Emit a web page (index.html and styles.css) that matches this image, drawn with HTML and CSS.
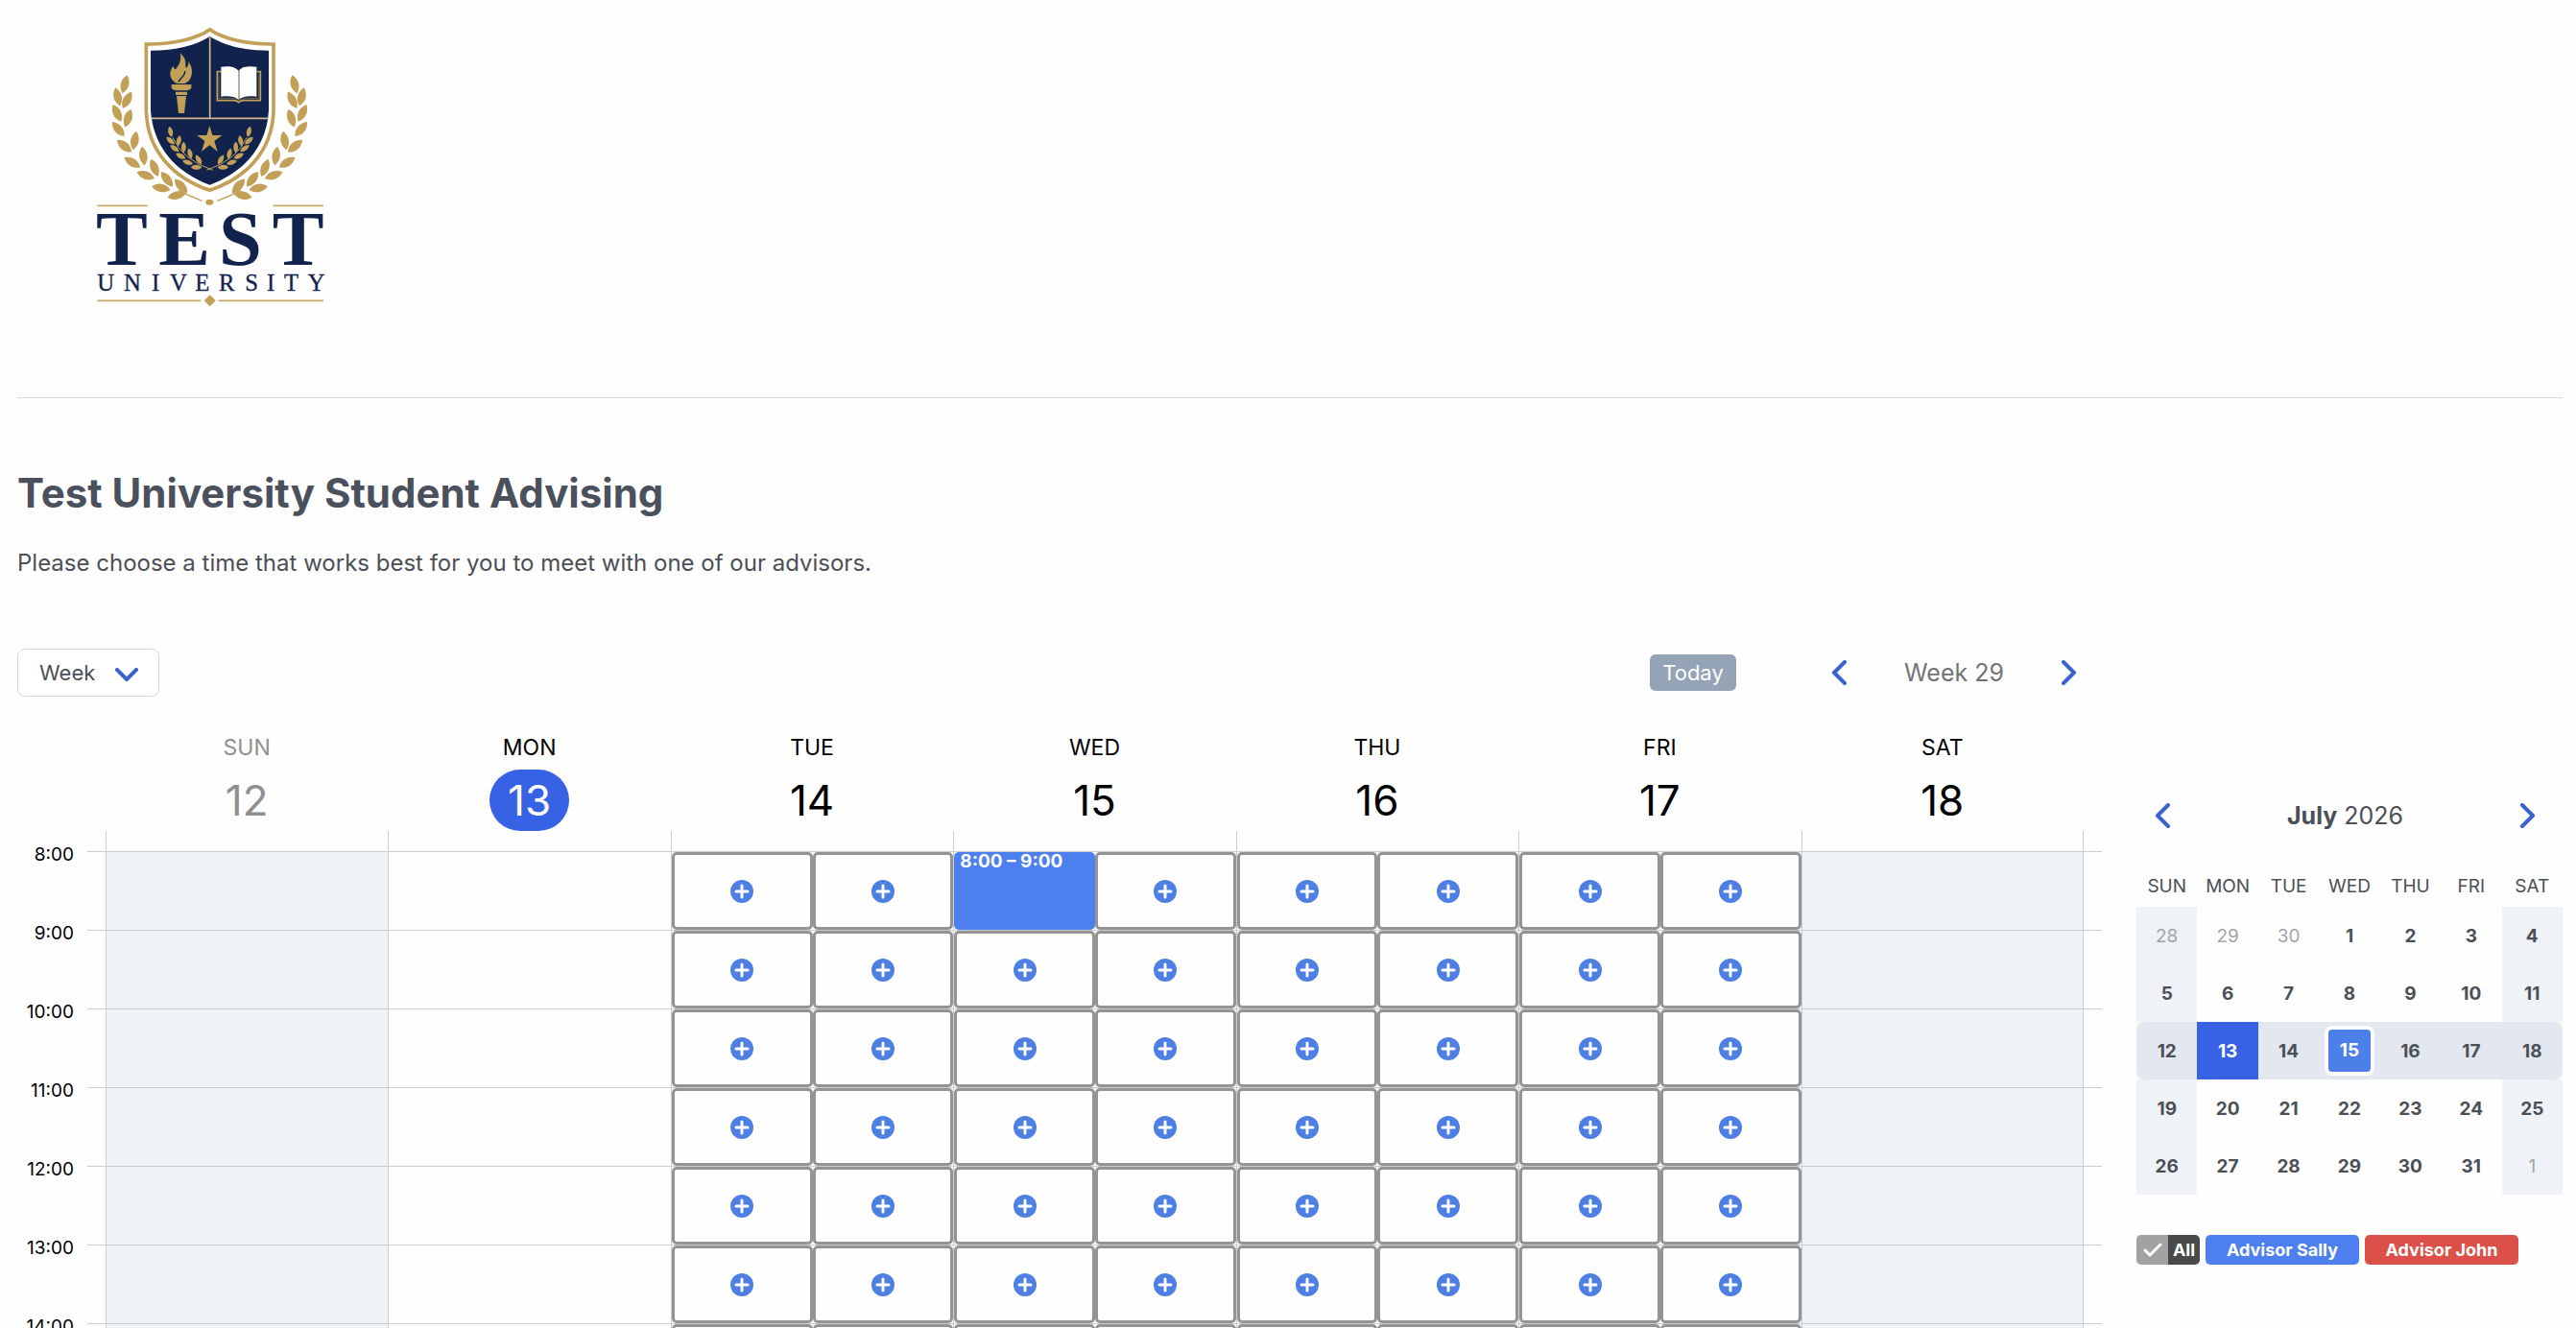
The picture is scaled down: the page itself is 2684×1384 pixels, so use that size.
FILE: index.html
```
<!DOCTYPE html>
<html lang="en">
  <head>
    <meta charset="utf-8">
    <title>Test University Student Advising</title>
    <link rel="stylesheet" href="styles.css">
  </head>

<body>
  <header class="site-header">
    <svg class="logo" viewBox="0 0 840 1020" role="img" aria-label="Test University">
      <defs>
        <path id="leaf" d="M0 -30 C17 -12 17 12 0 29 C-17 12 -17 -12 0 -30 Z"/>
        <g id="branch">
          <use href="#leaf" transform="translate(150 264) rotate(15)"/>
          <use href="#leaf" transform="translate(128 303) rotate(-14)"/>
          <use href="#leaf" transform="translate(157 313) rotate(28)"/>
          <use href="#leaf" transform="translate(126 354) rotate(-26)"/>
          <use href="#leaf" transform="translate(160 370) rotate(18)"/>
          <use href="#leaf" transform="translate(130 404) rotate(-40)"/>
          <use href="#leaf" transform="translate(181 440) rotate(10)"/>
          <use href="#leaf" transform="translate(149 457) rotate(-50)"/>
          <use href="#leaf" transform="translate(208 488) rotate(-8)"/>
          <use href="#leaf" transform="translate(174 508) rotate(-58)"/>
          <use href="#leaf" transform="translate(243 525) rotate(-22)"/>
          <use href="#leaf" transform="translate(216 548) rotate(-70)"/>
          <use href="#leaf" transform="translate(282 561) rotate(-38)"/>
          <use href="#leaf" transform="translate(264 588) rotate(-80)"/>
          <use href="#leaf" transform="translate(326 582) rotate(-42)"/>
          <use href="#leaf" transform="translate(312 611) rotate(78)"/>
          <path d="M318 596 Q350 612 392 628" fill="none" stroke="#c2a057" stroke-width="4"/>
        </g>
        <g id="sprig">
          <use href="#leaf" transform="translate(293 412) rotate(-12) scale(.58)"/>
          <use href="#leaf" transform="translate(293 440) rotate(-48) scale(.58)"/>
          <use href="#leaf" transform="translate(319 440) rotate(10) scale(.58)"/>
          <use href="#leaf" transform="translate(306 464) rotate(-55) scale(.58)"/>
          <use href="#leaf" transform="translate(334 461) rotate(0) scale(.58)"/>
          <use href="#leaf" transform="translate(325 488) rotate(-62) scale(.58)"/>
          <use href="#leaf" transform="translate(354 480) rotate(-15) scale(.58)"/>
          <use href="#leaf" transform="translate(347 508) rotate(-72) scale(.58)"/>
          <use href="#leaf" transform="translate(381 499) rotate(-32) scale(.58)"/>
          <use href="#leaf" transform="translate(374 523) rotate(-88) scale(.58)"/>
          <path d="M300 430 Q330 500 425 532" fill="none" stroke="#c2a057" stroke-width="3"/>
        </g>
      </defs>

      <!-- shield -->
      <path d="M416 92 C455 120 530 139 615 138 L615 345 C612 480 520 560 416 595 C312 560 220 480 217 345 L217 138 C302 139 377 120 416 92 Z" fill="#fefefe" stroke="#c2a057" stroke-width="11"/>
      <path d="M416 114 C460 142 520 158 600 158 L600 345 C594 460 520 540 416 578 C312 540 238 460 231 345 L231 158 C312 158 372 142 416 114 Z" fill="#11234d"/>
      <path d="M416 116 V370 M233 370 H599" stroke="#d0b98a" stroke-width="5"/>

      <g fill="#c2a057">
        <use href="#branch"/>
        <use href="#branch" transform="translate(831 0) scale(-1 1)"/>
        <use href="#sprig"/>
        <use href="#sprig" transform="translate(831 0) scale(-1 1)"/>
        <ellipse cx="415" cy="632" rx="12" ry="9"/>
        <!-- torch -->
        <path d="M323 166 C348 188 336 204 342 212 C350 206 350 198 349 192 C366 214 364 250 338 261 H312 C292 250 284 226 302 206 C303 214 306 217 309 216 C322 202 328 186 323 166 Z"/>
        <path d="M296 264 H358 V276 Q352 282 345 283 H309 Q302 282 296 276 Z M309 287 H345 V297 H309 Z M312 300 H342 L336 354 H318 Z"/>
        <!-- star -->
        <path d="M415 393 L424 423 H454 L430 441 L440 474 L415 454 L390 474 L400 441 L376 423 H406 Z"/>
      </g>
      <path d="M318 256 C326 240 340 238 338 222" fill="none" stroke="#11234d" stroke-width="4"/>

      <!-- book -->
      <path d="M450 224 H439 V314 H490 Q500 314 506 320 Q512 314 522 314 H574 V224 H563" fill="none" stroke="#c2a057" stroke-width="5"/>
      <path d="M506 222 C494 206 472 206 451 209 V302 C472 300 494 300 506 312 C518 300 540 300 562 302 V209 C540 206 518 206 506 222 Z" fill="#fff"/>
      <path d="M507 222 V312 M444 232 V307 H484 Q498 308 507 315 Q516 308 530 307 H569 V232" fill="none" stroke="#6d6545" stroke-width="3"/>

      <!-- wordmark -->
      <path d="M64 643 H221 M614 643 H771 M64 940 H388 M443 940 H771" stroke="#c9ab68" stroke-width="5"/>
      <path d="M416 922 L434 940 L416 958 L398 940 Z" fill="#c2a057"/>
      <text class="logo-name" x="60 256 444 611" y="828">TEST</text>
      <text class="logo-sub" x="64 147 234 291 370 444 526 594 648 722" y="908">UNIVERSITY</text>
    </svg>
  </header>

  <section class="intro">
    <h1>Test University Student Advising</h1>
    <p>Please choose a time that works best for you to meet with one of our advisors.</p>
  </section>

  <main class="scheduler">
    <section class="week">
      <div class="toolbar">
        <div class="view-picker">
          <select class="view-select" aria-label="Calendar view">
            <option>Week</option>
            <option>Day</option>
            <option>Month</option>
          </select>
          <svg class="view-arrow" viewBox="0 0 24 14"><path d="M2 2 L12 12 L22 2"/></svg>
        </div>
        <div class="week-nav">
          <button class="today-button">Today</button>
          <button class="arrow-button" aria-label="Previous week"><svg class="arrow" viewBox="0 0 16 26"><path d="M14 2 L3 13 L14 24"/></svg></button>
          <span class="week-label">Week 29</span>
          <button class="arrow-button" aria-label="Next week"><svg class="arrow" viewBox="0 0 16 26"><path d="M2 2 L13 13 L2 24"/></svg></button>
        </div>
      </div>

      <div class="day-heads">
        <div class="day-head past"><span>SUN</span><span class="day-num">12</span></div>
        <div class="day-head today"><span>MON</span><span class="day-num">13</span></div>
        <div class="day-head"><span>TUE</span><span class="day-num">14</span></div>
        <div class="day-head"><span>WED</span><span class="day-num">15</span></div>
        <div class="day-head"><span>THU</span><span class="day-num">16</span></div>
        <div class="day-head"><span>FRI</span><span class="day-num">17</span></div>
        <div class="day-head"><span>SAT</span><span class="day-num">18</span></div>
      </div>

      <div class="js-hours hours"></div>
    </section>

    <aside class="sidebar">
      <div class="month-nav">
        <button class="arrow-button" aria-label="Previous month"><svg class="arrow" viewBox="0 0 16 26"><path d="M14 2 L3 13 L14 24"/></svg></button>
        <span class="month-label"><b>July</b> 2026</span>
        <button class="arrow-button" aria-label="Next month"><svg class="arrow" viewBox="0 0 16 26"><path d="M2 2 L13 13 L2 24"/></svg></button>
      </div>

      <table class="month">
        <thead>
          <tr><th>SUN</th><th>MON</th><th>TUE</th><th>WED</th><th>THU</th><th>FRI</th><th>SAT</th></tr>
        </thead>
        <tbody>
          <tr><td class="other">28</td><td class="other">29</td><td class="other">30</td><td>1</td><td>2</td><td>3</td><td>4</td></tr>
          <tr><td>5</td><td>6</td><td>7</td><td>8</td><td>9</td><td>10</td><td>11</td></tr>
          <tr class="current"><td>12</td><td class="month-today">13</td><td>14</td><td><span class="booked">15</span></td><td>16</td><td>17</td><td>18</td></tr>
          <tr><td>19</td><td>20</td><td>21</td><td>22</td><td>23</td><td>24</td><td>25</td></tr>
          <tr><td>26</td><td>27</td><td>28</td><td>29</td><td>30</td><td>31</td><td class="other">1</td></tr>
        </tbody>
      </table>

      <div class="filters">
        <button class="filter-all">
          <span class="filter-check"><svg viewBox="0 0 20 16"><path d="M2 8 L7 13 L18 2"/></svg></span>
          <span class="filter-text">All</span>
        </button>
        <button class="filter sally">Advisor Sally</button>
        <button class="filter john">Advisor John</button>
      </div>
    </aside>
  </main>

  <script>
    const plusIcon = '<svg class="plus" viewBox="0 0 24 24"><circle cx="12" cy="12" r="12"/><path d="M12 6 V18 M6 12 H18"/></svg>';
    const openSlot = `<button class="slot" aria-label="Book this time">${plusIcon}</button>`;
    const bookedSlot = '<button class="slot event">8:00 – 9:00</button>';

    function dayCell(day, hour) {
      if (day === 0 || day === 6) {
        return '<div class="cell closed"></div>';
      }
      if (day === 1) {
        return '<div class="cell"></div>';
      }
      const first = (day === 3 && hour === 8) ? bookedSlot : openSlot;
      return `<div class="cell">${first}${openSlot}</div>`;
    }

    // short row above 8:00 that only carries the column lines
    let html = `<div class="hour-row lead"><div class="time"></div><div class="cells">${'<div class="cell"></div>'.repeat(7)}</div></div>`;

    for (let hour = 8; hour < 15; hour++) {
      let cells = '';
      for (let day = 0; day < 7; day++) {
        cells += dayCell(day, hour);
      }
      html += `<div class="hour-row"><div class="time">${hour}:00</div><div class="cells">${cells}</div></div>`;
    }

    document.querySelector('.js-hours').innerHTML = html;
  </script>
</body>
</html>
```
FILE: styles.css
```
* {
  box-sizing: border-box;
}

body {
  height: 100vh;
  margin: 0;
  padding: 0 14px 0 18px;
  overflow: hidden;
  background-color: #fefefe;
  color: #4b4f56;
  font-family: Inter, "Liberation Sans", sans-serif;
}

button, select {
  font-family: inherit;
  border: none;
  cursor: pointer;
}

.site-header {
  height: 415px;
  padding-left: 62px;
  border-bottom: 1px solid #d5d9dc;
}

.logo {
  display: block;
  width: 280px;
  height: 340px;
}

.logo-name {
  fill: #11234d;
  font-family: "Liberation Serif", serif;
  font-size: 242px;
  font-weight: bold;
}

.logo-sub {
  fill: #11234d;
  stroke: #11234d;
  stroke-width: 1px;
  font-family: "Liberation Serif", serif;
  font-size: 74px;
}

.intro {
  padding-top: 71px;
}

.intro h1 {
  margin: 0;
  color: #4a505c;
  font-size: 42px;
  line-height: 56px;
}

.intro p {
  margin: 29px 0 0;
  font-size: 24px;
  line-height: 32px;
}

.scheduler {
  display: flex;
  gap: 36px;
  padding-top: 73px;
}

.week {
  flex: 1;
}

.toolbar {
  display: flex;
  justify-content: space-between;
  align-items: center;
  height: 50px;
}

.view-picker {
  position: relative;
}

.view-select {
  width: 148px;
  height: 50px;
  padding: 0 22px;
  appearance: none;
  background-color: #fff;
  color: #4b4f56;
  border: 1px solid #d5d8dc;
  border-radius: 8px;
  font-size: 22px;
}

.view-arrow {
  position: absolute;
  top: 20px;
  right: 22px;
  width: 24px;
  height: 14px;
  pointer-events: none;
}

.view-arrow path, .arrow path {
  fill: none;
  stroke: #3a64cc;
  stroke-width: 4;
  stroke-linecap: round;
  stroke-linejoin: round;
}

.week-nav {
  display: flex;
  align-items: center;
  padding-right: 10px;
}

.today-button {
  width: 90px;
  height: 38px;
  margin-right: 83px;
  padding: 0;
  background-color: #94a3b5;
  color: #fff;
  border-radius: 6px;
  font-size: 22px;
}

.arrow-button {
  display: flex;
  justify-content: center;
  align-items: center;
  width: 48px;
  height: 40px;
  padding: 0;
  background-color: transparent;
}

.arrow {
  width: 16px;
  height: 26px;
}

.week-label {
  width: 192px;
  color: #707478;
  font-size: 25px;
  text-align: center;
}

.day-heads {
  display: grid;
  grid-template-columns: repeat(7, 1fr);
  padding: 38px 19px 0 92px;
  color: #000;
}

.day-head {
  display: flex;
  flex-direction: column;
  align-items: center;
  font-size: 23px;
  line-height: 30px;
}

.day-num {
  height: 64px;
  margin-top: 8px;
  padding: 0 19px;
  border-radius: 32px;
  font-size: 44px;
  line-height: 64px;
}

.past {
  color: #8f8f8f;
}

.today .day-num {
  background-color: #3662e3;
  color: #fff;
}

.hour-row {
  display: flex;
  height: 82px;
}

.lead {
  height: 21px;
}

.time {
  width: 73px;
  margin-top: -7px;
  padding-right: 14px;
  color: #000;
  font-size: 19px;
  line-height: 22px;
  text-align: right;
}

.cells {
  flex: 1;
  display: grid;
  grid-template-columns: repeat(7, 1fr);
  padding: 0 19px;
  border-top: 1px solid #c9cdd0;
}

.lead .cells {
  border-top: none;
}

.cell {
  display: flex;
  border-left: 1px solid #c9cdd0;
}

.cell:last-child {
  border-right: 1px solid #c9cdd0;
}

.closed {
  background-color: #eff3f8;
}

.slot {
  flex: 1;
  display: flex;
  justify-content: center;
  align-items: center;
  padding: 0;
  background-color: #fefefe;
  border: 3px solid #949494;
  border-radius: 5px;
}

.plus {
  width: 24px;
  height: 24px;
}

.plus circle {
  fill: #4e7fe3;
}

.plus path {
  stroke: #fff;
  stroke-width: 3;
  stroke-linecap: round;
}

.event {
  justify-content: flex-start;
  align-items: flex-start;
  padding-left: 6px;
  background-color: #4d7fee;
  border: none;
  color: #fff;
  font-size: 19px;
  font-weight: bold;
  line-height: 20px;
}

.sidebar {
  width: 444px;
  padding-top: 154px;
}

.month-nav {
  display: flex;
  justify-content: space-between;
  align-items: center;
  padding: 0 12px 0 3px;
}

.month-label {
  font-size: 25px;
  line-height: 40px;
}

.month {
  width: 100%;
  margin-top: 36px;
  border-collapse: collapse;
  table-layout: fixed;
  font-size: 19px;
  text-align: center;
}

.month th {
  height: 39px;
  padding: 0 0 4px;
  font-weight: normal;
}

.month td {
  height: 60px;
  padding: 0;
  font-weight: bold;
}

.month td:first-child, .month td:last-child {
  background-color: #eff3f8;
}

.month .other {
  color: #a2a4a8;
  font-weight: normal;
}

.month .current td {
  background-color: #e2e7f0;
}

.month .current td:first-child {
  border-radius: 8px 0 0 8px;
}

.month .current td:last-child {
  border-radius: 0 8px 8px 0;
}

.month .current .month-today {
  background-color: #3662e3;
  color: #fff;
}

.booked {
  display: block;
  width: 52px;
  height: 52px;
  margin: 0 auto;
  background-color: #4d7fe8;
  border: 4px solid #fff;
  border-radius: 8px;
  color: #fff;
  line-height: 44px;
}

.filters {
  display: flex;
  gap: 6px;
  margin-top: 42px;
}

.filters button {
  height: 31px;
  padding: 0;
  border-radius: 5px;
  color: #fff;
  font-size: 18px;
  font-weight: bold;
}

.filter-all {
  display: flex;
  overflow: hidden;
}

.filter-check, .filter-text {
  display: flex;
  justify-content: center;
  align-items: center;
  width: 33px;
  height: 31px;
}

.filter-check {
  background-color: #a2a2a2;
}

.filter-check svg {
  width: 20px;
  height: 16px;
}

.filter-check path {
  fill: none;
  stroke: #fff;
  stroke-width: 3;
  stroke-linecap: round;
}

.filter-text {
  background-color: #4a4a4a;
}

.filter {
  width: 160px;
}

.filters .sally {
  background-color: #4d7fee;
}

.filters .john {
  background-color: #dc504a;
}
```
